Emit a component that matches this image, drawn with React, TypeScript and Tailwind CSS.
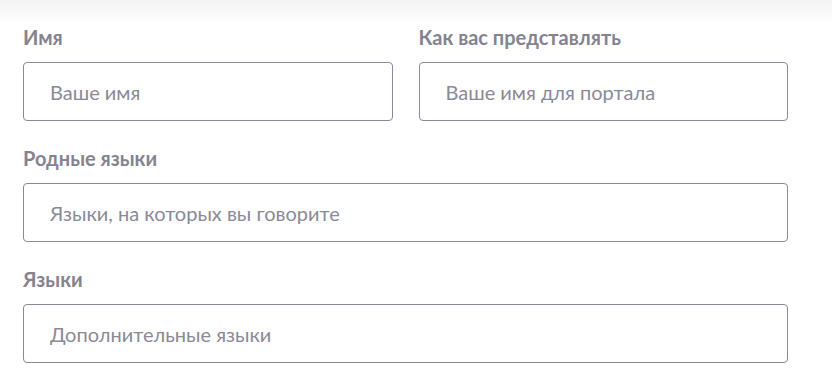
const fieldClass =
  'h-[59px] w-full rounded-[4px] border border-[#8b8898] bg-white px-[26px] text-[20px] text-[#3c3a47] outline-none placeholder:text-[#8b8998]';

function Field({ label, placeholder }: { label: string; placeholder: string }) {
  return (
    <label className="flex flex-col gap-[13px]">
      <span className="text-[20px] font-bold leading-[24px] text-[#85838f]">{label}</span>
      <input type="text" placeholder={placeholder} className={fieldClass} />
    </label>
  );
}

export default function App() {
  return (
    <div
      className="relative min-h-[385px] w-full bg-white"
      style={{ fontFamily: 'Lato, "Noto Sans", sans-serif' }}
    >
      {/* faint shadow of the header above */}
      <div className="absolute inset-x-0 top-0 h-[24px] bg-gradient-to-b from-[#f3f3f3] to-white" />
      <div className="relative flex w-[788px] flex-col gap-[25px] pl-[23px] pt-[25px]">
        <div className="grid grid-cols-2 gap-[26px]">
          <Field label="Имя" placeholder="Ваше имя" />
          <Field label="Как вас представлять" placeholder="Ваше имя для портала" />
        </div>
        <Field label="Родные языки" placeholder="Языки, на которых вы говорите" />
        <Field label="Языки" placeholder="Дополнительные языки" />
      </div>
    </div>
  );
}
